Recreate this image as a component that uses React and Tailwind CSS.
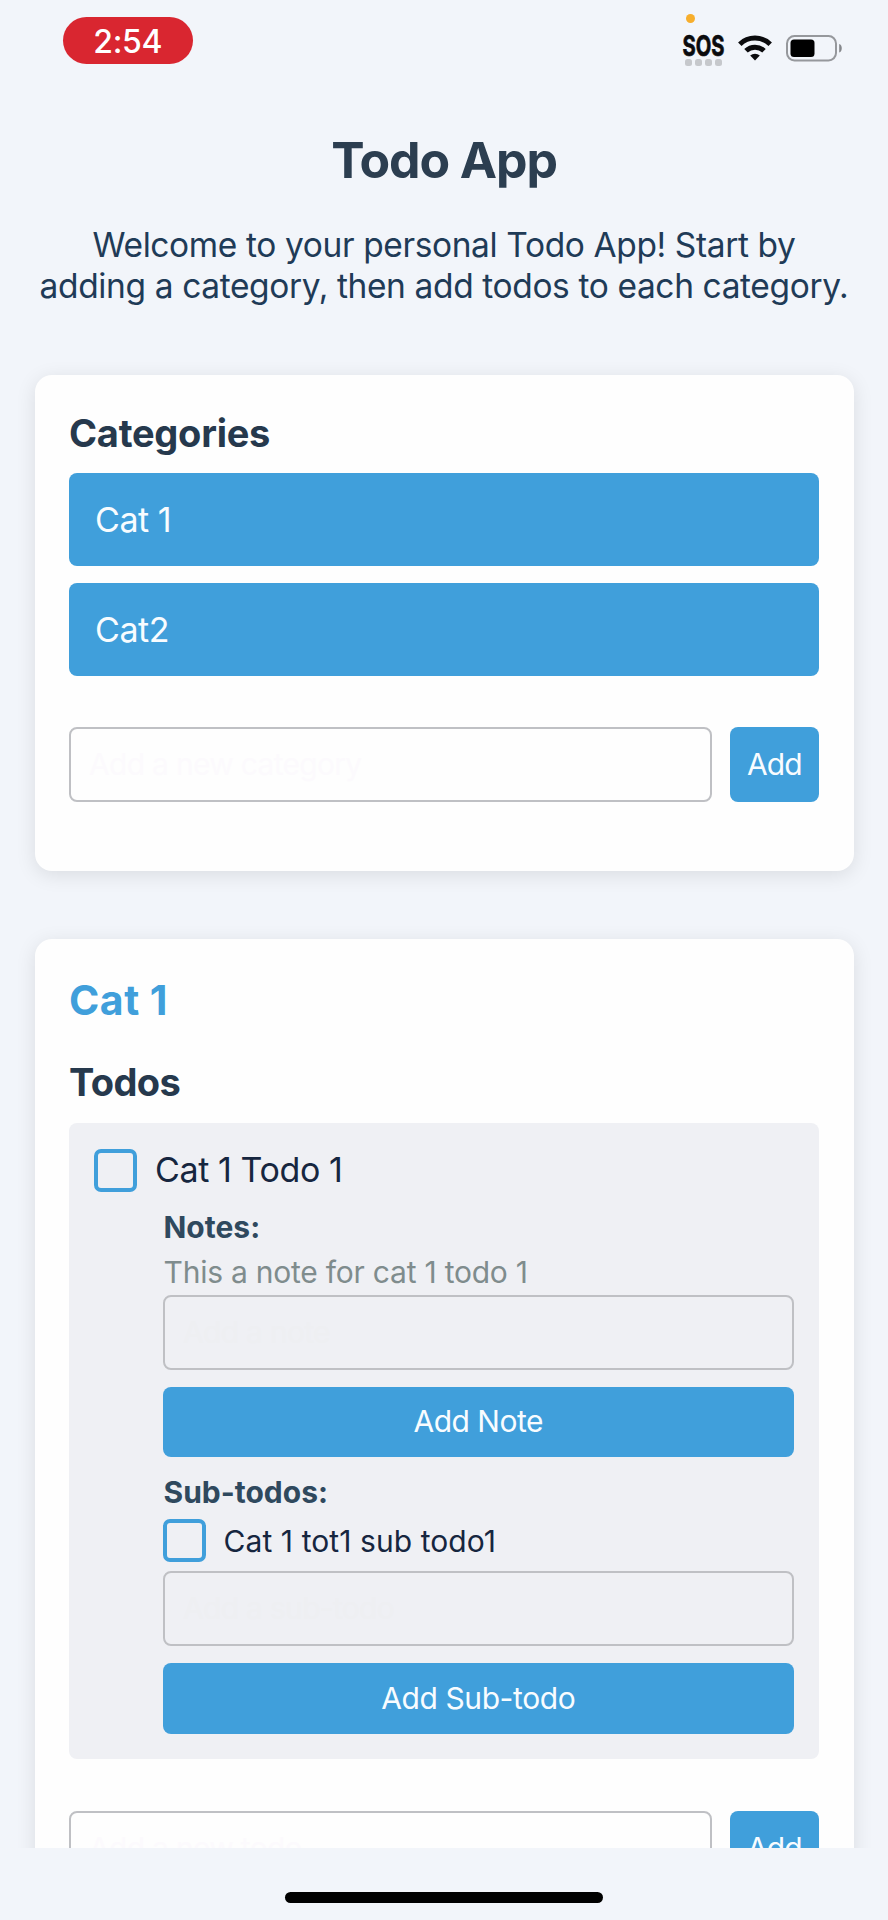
function StatusBar() {
  return (
    <div className="flex h-[90px] justify-between pl-[62.5px] pr-[45px]">
      <div className="mt-[17px] flex h-[47px] w-[130.5px] items-center justify-center rounded-full bg-[#d92630] text-[32px] font-medium leading-none tracking-[-0.3px] text-white">
        <span className="pt-[2px]">2:54</span>
      </div>
      <div className="flex">
        <div className="flex w-[50px] flex-col pt-[14px]">
          <span className="ml-[4px] size-[9px] rounded-full bg-[#f7ae2c]" />
          <svg className="mt-[4px] overflow-visible" width="50" height="38" viewBox="0 0 50 38">
            <text x="0.500" y="28.600" textLength="42" lengthAdjust="spacingAndGlyphs" strokeWidth="0.7" className="fill-[#0b0b0d] stroke-[#0b0b0d] font-['Inter'] text-[28.500px] font-bold">SOS</text>
          </svg>
          <div className="-mt-[6px] ml-[3px] flex gap-[3px]">
            {[0, 1, 2, 3].map((i) => (
              <span key={i} className="size-[7px] rounded-[2.5px] bg-[#c6c8cc]" />
            ))}
          </div>
        </div>
        <svg className="ml-[6px] mt-[34px]" width="34" height="27" viewBox="0 0 34 27" fill="none" stroke="#0b0b0d" strokeWidth="5">
          <path d="M1.8 10.2a22 22 0 0 1 30.4 0" />
          <path d="M8 16.8a13 13 0 0 1 18 0" />
          <path d="M17 26.5l-4.8-4.9a7 7 0 0 1 9.6 0z" fill="#0b0b0d" stroke="none" />
        </svg>
        <svg className="ml-[14px] mt-[35px]" width="57" height="27" viewBox="0 0 57 27">
          <rect x="1" y="1" width="49" height="24.5" rx="7.5" fill="none" stroke="#96989c" strokeWidth="2" />
          <rect x="4.5" y="4.5" width="24" height="17.5" rx="3.5" fill="#000" />
          <path d="M53.2 9c3.4 1 3.4 7.500 0 8.500z" fill="#85878b" />
        </svg>
      </div>
    </div>
  );
}

const field = "flex items-center rounded-[8px] border-2 border-[#bfc0c4] h-[75px]";
const solid = "flex items-center justify-center rounded-[8px] bg-[#409fdb] text-[#f8fcff]";
const card = "rounded-[17px] bg-[#fefefe] px-[34.5px] shadow-[0_4px_20px_rgba(0,0,0,0.1)]";

function Category({ children }) {
  return (
    <div className="flex h-[92.500px] items-center rounded-[8px] bg-[#409fdb] pl-[26px] pt-[1px] text-[34px] leading-none tracking-[-0.450px] text-[#f8fcff]">
      <span>{children}</span>
    </div>
  );
}

function AddRow({ children }) {
  return (
    <div className="flex gap-[18px]">
      <div className={field + " w-[642.5px] pl-[18px] text-[30px] tracking-[-0.700px] text-[#fcfafd]"}>
        <span>{children}</span>
      </div>
      <div className={solid + " flex-1 text-[30px] tracking-[-0.900px]"}><span>Add</span></div>
    </div>
  );
}

export default function App() {
  return (
    <div className="h-[1920px] w-[888px] overflow-hidden whitespace-nowrap bg-[#f2f5fa] font-['Inter',sans-serif]">
      <div className="h-[1848px] overflow-hidden">
        <StatusBar />
        <h1 className="mt-[40px] text-center text-[50px] font-bold leading-[60px] tracking-[-1.100px] text-[#2c3e50]"><span>Todo App</span></h1>
        <p className="mt-[35px] text-center text-[33.500px] leading-[40.500px] tracking-[-0.380px] text-[#1f3b57]">
          <span>Welcome to your personal Todo App! Start by</span>
          <br />
          <span>adding a category, then add todos to each category.</span>
        </p>

        <section className={card + " mx-[34.5px] mt-[69px] h-[496px] pt-[36px]"}>
          <h2 className="text-[38px] font-bold leading-[44px] tracking-[-0.250px] text-[#26394d]"><span>Categories</span></h2>
          <div className="mb-[51px] mt-[18px] flex flex-col gap-[17.500px]">
            <Category>Cat 1</Category>
            <Category>Cat2</Category>
          </div>
          <AddRow>Add a new category</AddRow>
        </section>

        <section className={card + " mx-[34.5px] mt-[68px] h-[1000px] pt-[37px]"}>
          <h2 className="text-[41px] font-bold leading-[48px] tracking-[0.500px] text-[#409fdb]"><span>Cat 1</span></h2>
          <h3 className="mt-[36px] text-[38px] font-bold leading-[44px] tracking-[-0.600px] text-[#26394d]"><span>Todos</span></h3>
          <div className="mt-[19px] h-[636px] rounded-[8px] bg-[#eff0f4] pl-[25px] pr-[25.500px] pt-[25.500px]">
            <div className="flex h-[43px] items-center">
              <span className="size-[43px] rounded-[7px] border-4 border-[#409fdb]" />
              <span className="ml-[18px] text-[34px] leading-none tracking-[-0.400px] text-[#16263f]">Cat 1 Todo 1</span>
            </div>
            <div className="pl-[69px]">
              <h4 className="mt-[17px] pl-[0.500px] text-[30px] font-bold leading-[36px] text-[#2f495e]"><span>Notes:</span></h4>
              <p className="mt-[9px] pl-[0.500px] text-[30px] leading-[36px] tracking-[-0.230px] text-[#7f8c8d]"><span>This a note for cat 1 todo 1</span></p>
              <div className={field + " mt-[5px] pl-[18px] text-[30px] tracking-[-0.700px] text-[#eeeff2]"}><span>Add a note</span></div>
              <div className={solid + " mt-[17px] h-[70.500px] text-[30px] tracking-[-0.500px]"}><span>Add Note</span></div>
              <h4 className="mt-[17px] pl-[0.500px] text-[30px] font-bold leading-[36px] text-[#2f495e]"><span>Sub-todos:</span></h4>
              <div className="mt-[9px] flex h-[43px] items-center">
                <span className="size-[43px] rounded-[7px] border-4 border-[#409fdb]" />
                <span className="ml-[17.500px] text-[30px] leading-none tracking-[0.080px] text-[#16263f]">Cat 1 tot1 sub todo1</span>
              </div>
              <div className={field + " mt-[9px] pl-[18px] text-[30px] tracking-[-0.700px] text-[#eeeff2]"}><span>Add a sub-todo</span></div>
              <div className={solid + " mt-[17px] h-[70.500px] text-[30px] tracking-[-0.400px]"}><span>Add Sub-todo</span></div>
            </div>
          </div>
          <div className="mt-[52px]"><AddRow>Add a new todo</AddRow></div>
        </section>
      </div>
      <div className="flex h-[72px] justify-center pt-[44px]">
        <div className="h-[11px] w-[318px] rounded-full bg-black" />
      </div>
    </div>
  );
}
